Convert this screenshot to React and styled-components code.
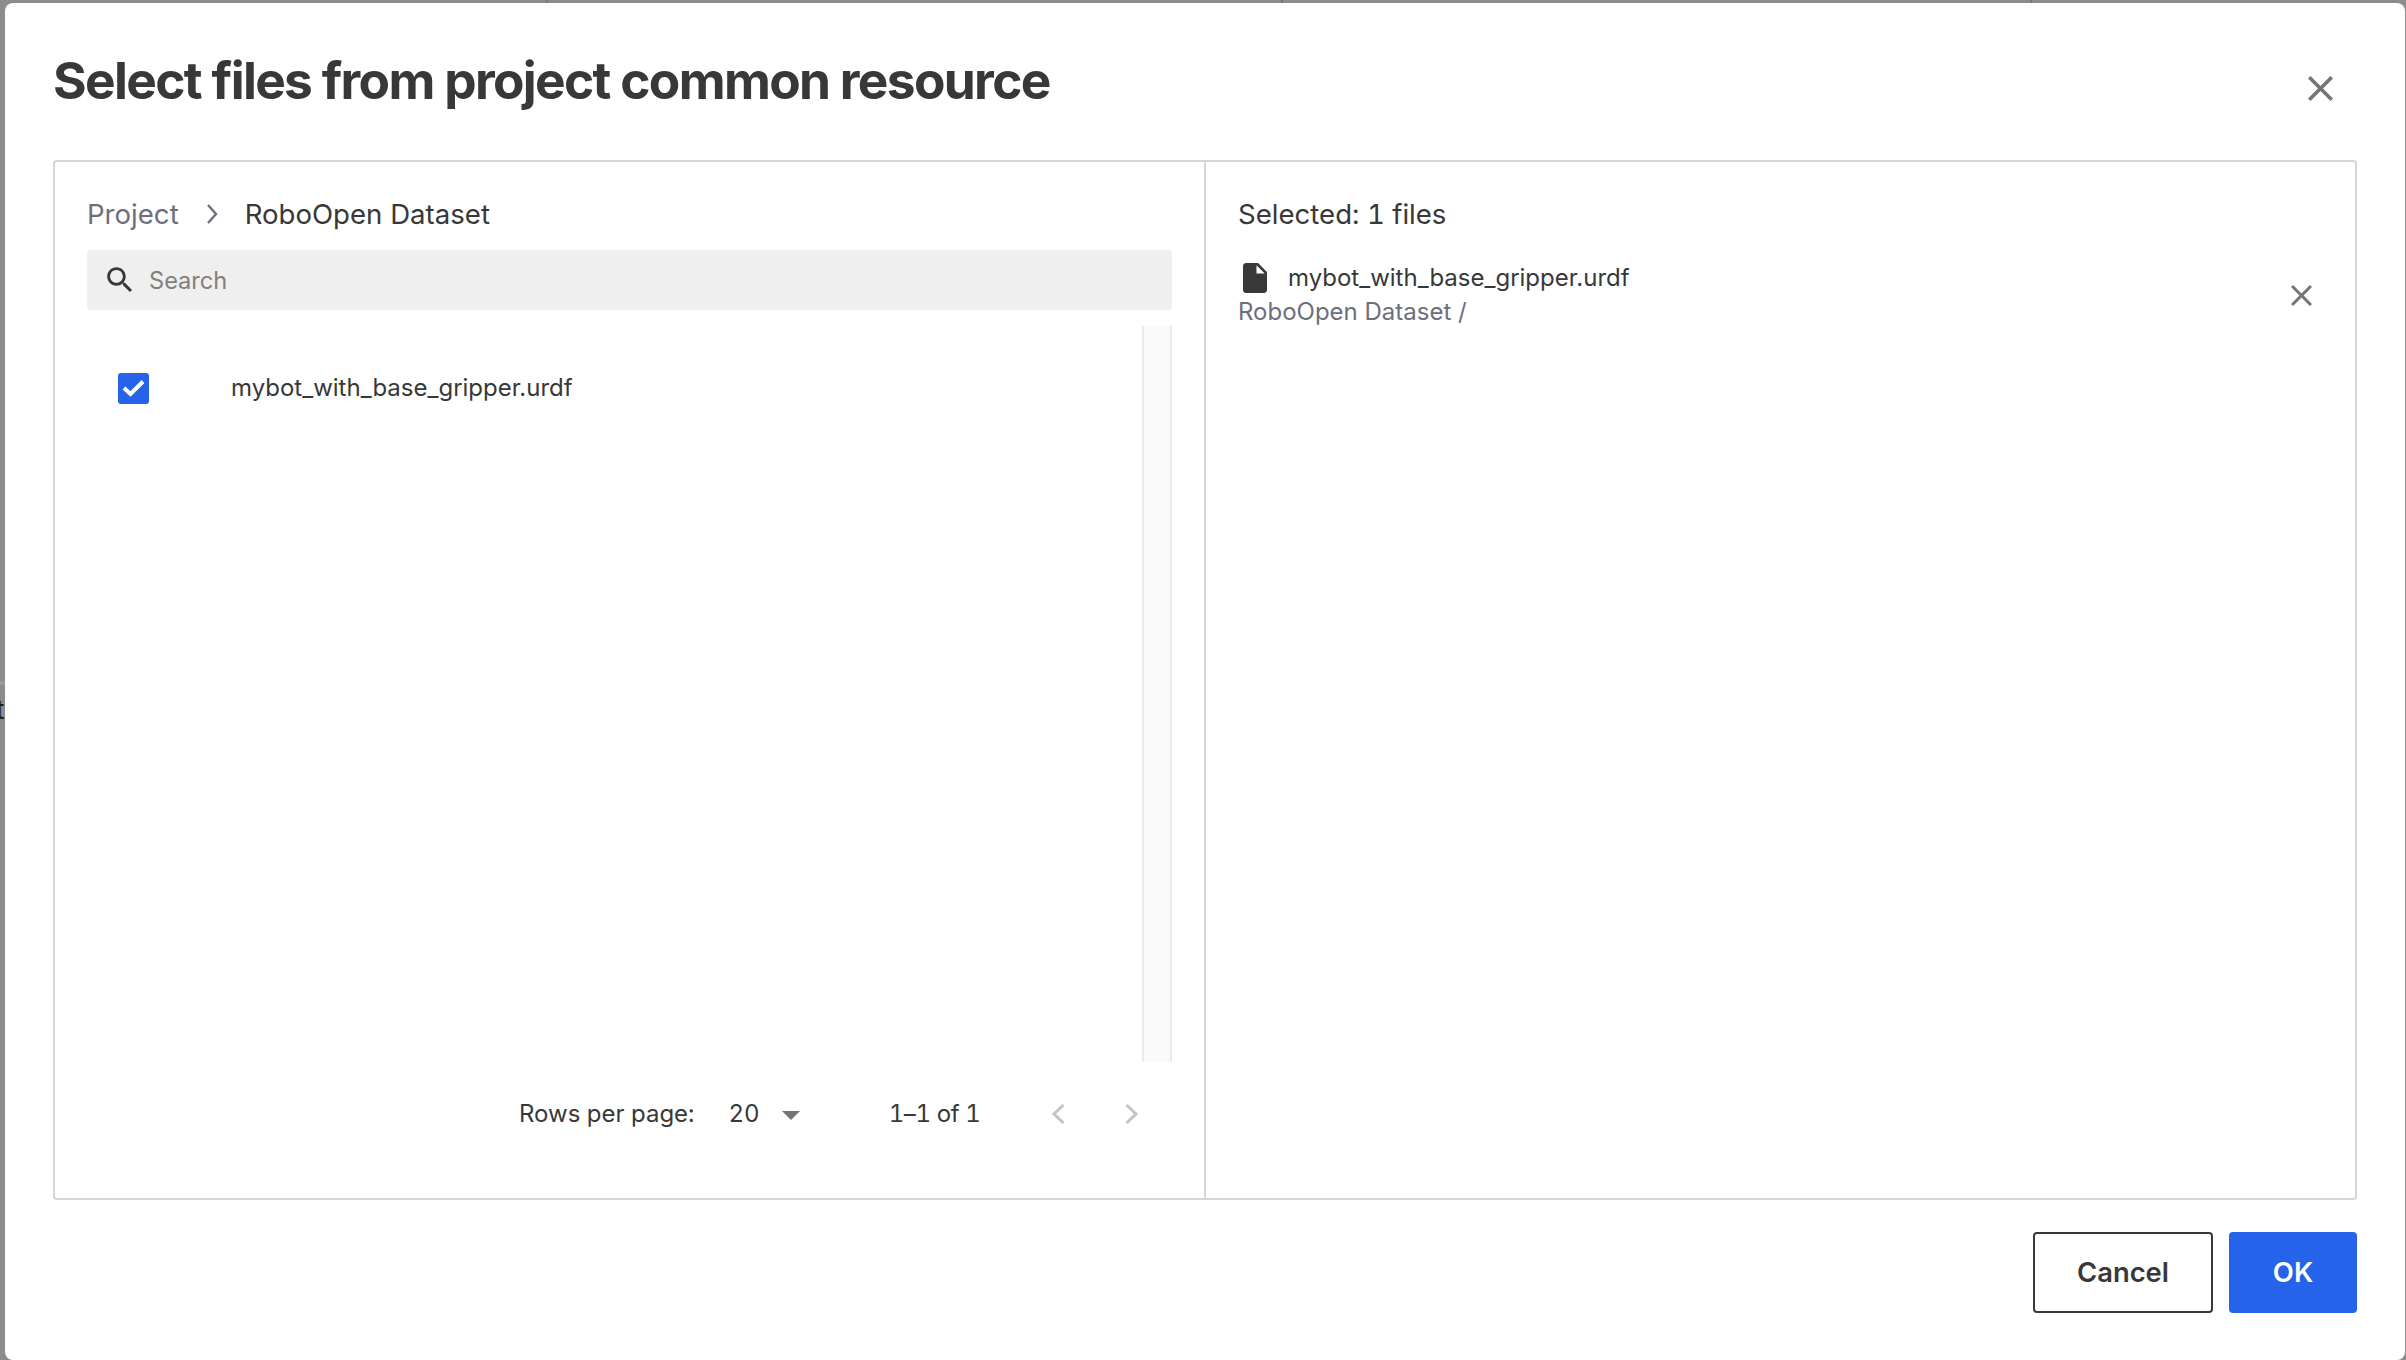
import React from "react";
import styled, { createGlobalStyle } from "styled-components";

const GlobalStyle = createGlobalStyle`
  html, body {
    margin: 0;
    padding: 0;
    background: #8c8c8c;
  }
  * {
    box-sizing: border-box;
  }
`;

const Backdrop = styled.div`
  position: relative;
  width: 2406px;
  height: 1360px;
  padding: 3px 1px 0 5px;
  overflow: hidden;
  background: #8c8c8c;
  font-family: Inter, "Liberation Sans", sans-serif;
  color: #383838;
`;

const BackdropTick = styled.span`
  position: absolute;
  top: 0;
  left: ${(p) => p.$x}px;
  width: 2px;
  height: 3px;
  background: #777;
`;

const BackdropLine = styled.span`
  position: absolute;
  top: 681px;
  left: 0;
  width: 5px;
  height: 4px;
  background: #9a9a9a;
`;

const BackdropLetter = styled.span`
  position: absolute;
  top: 695px;
  left: -4px;
  font-size: 26px;
  line-height: 30px;
  color: #1f1f1f;
`;

const Modal = styled.div`
  position: relative;
  display: flex;
  flex-direction: column;
  height: 100%;
  background: #fff;
  border-radius: 8px;
`;

const Header = styled.header`
  display: flex;
  align-items: flex-start;
  justify-content: space-between;
  height: 157px;
  padding: 49px 72px 0 48px;
`;

const Title = styled.h1`
  margin: 0;
  font-size: 51.4px;
  line-height: 56px;
  font-weight: 700;
  letter-spacing: -1.66px;
  color: #383838;
`;

const IconButton = styled.button`
  display: flex;
  padding: 0;
  border: 0;
  background: none;
  color: #757575;
  margin: ${(p) => p.$margin || 0};
`;

const Panels = styled.div`
  display: grid;
  grid-template-columns: 1151px 1fr;
  width: 2304px;
  height: 1040px;
  margin-left: 48px;
  border: 2px solid #d6d6d6;
  border-radius: 4px;
`;

const LeftPanel = styled.section`
  display: flex;
  flex-direction: column;
  padding: 30px 32px 0 32px;
  border-right: 2px solid #d6d6d6;
`;

const RightPanel = styled.section`
  display: flex;
  flex-direction: column;
  padding: 30px 31px 0 32px;
`;

const Breadcrumb = styled.nav`
  display: flex;
  align-items: center;
  height: 44px;
  font-size: 27.6px;
  line-height: 44px;
`;

const Crumb = styled.span`
  color: ${(p) => (p.$current ? "#383838" : "#6e6e7c")};
`;

const CrumbChevron = styled.svg`
  width: 14px;
  height: 22px;
  margin: 0 26px 0 26px;
  color: #6e6e7c;
`;

const SearchBox = styled.div`
  display: flex;
  align-items: center;
  height: 60px;
  margin-top: 14px;
  padding-left: 16px;
  background: #efefef;
  border-radius: 4px;
`;

const SearchIcon = styled.svg`
  flex: none;
  width: 34px;
  height: 34px;
  color: #383838;
`;

const SearchPlaceholder = styled.span`
  margin-left: 12px;
  font-size: 23.6px;
  color: #808080;
`;

const ListArea = styled.div`
  display: flex;
  height: 736px;
  margin-top: 16px;
`;

const ListBody = styled.div`
  flex: 1;
  padding-top: 47px;
`;

const ScrollTrack = styled.div`
  flex: none;
  width: 30px;
  background: #fafafa;
  border-left: 2px solid #ebebeb;
  border-right: 2px solid #ebebeb;
`;

const Row = styled.div`
  display: flex;
  align-items: center;
  height: 31px;
  padding-left: 31px;
`;

const Checkbox = styled.span`
  display: flex;
  flex: none;
  width: 31px;
  height: 31px;
  background: #2563eb;
  border-radius: 3px;
`;

const FileName = styled.span`
  font-size: 24px;
  line-height: 34px;
  color: #383838;
  margin-left: ${(p) => p.$gap}px;
`;

const RowFileName = styled(FileName)`
  margin-bottom: 2px;
`;

const Pagination = styled.div`
  display: flex;
  align-items: center;
  height: 40px;
  margin-top: 31px;
  padding-left: 432px;
  font-size: 24px;
  font-variant-numeric: tabular-nums;
  color: #383838;
`;

const RowsValue = styled.span`
  margin-left: 34px;
`;

const Caret = styled.span`
  width: 0;
  height: 0;
  margin: 4px 0 0 22px;
  border-left: 9px solid transparent;
  border-right: 9px solid transparent;
  border-top: 9px solid #757575;
`;

const PageRange = styled.span`
  margin-left: 89px;
  letter-spacing: -0.4px;
`;

const PageChevron = styled.svg`
  width: 14px;
  height: 20px;
  margin-top: 1px;
  color: #c4c4c4;
  margin-left: ${(p) => p.$gap}px;
`;

const SelectedTitle = styled.div`
  height: 44px;
  font-size: 27.6px;
  line-height: 44px;
  font-variant-numeric: tabular-nums;
  color: #383838;
`;

const SelectedItem = styled.div`
  display: flex;
  align-items: center;
  justify-content: space-between;
  margin-top: 25px;
`;

const SelectedInfo = styled.div`
  display: flex;
  flex-direction: column;
`;

const SelectedName = styled.div`
  display: flex;
  align-items: center;
  height: 34px;
`;

const FileIcon = styled.svg`
  flex: none;
  width: 36px;
  height: 36px;
  margin-left: -1px;
  color: #383838;
`;

const SelectedPath = styled.div`
  font-size: 24px;
  line-height: 34px;
  color: #6e6e7c;
`;

const Footer = styled.footer`
  display: flex;
  justify-content: flex-end;
  gap: 16px;
  padding: 32px 48px 0 0;
`;

const Button = styled.button`
  height: 81px;
  width: ${(p) => p.$width}px;
  padding: 0 0 2px;
  border: 2px solid ${(p) => (p.$primary ? "#2563eb" : "#383838")};
  border-radius: 4px;
  background: ${(p) => (p.$primary ? "#2563eb" : "#fff")};
  color: ${(p) => (p.$primary ? "#fff" : "#383838")};
  font-family: inherit;
  font-size: 27.4px;
  font-weight: 600;
`;

const CloseIcon = ({ size }) => (
  <svg width={size} height={size} viewBox="5 5 14 14" fill="currentColor">
    <path d="M19 6.41 17.59 5 12 10.59 6.41 5 5 6.41 10.59 12 5 17.59 6.41 19 12 13.41 17.59 19 19 17.59 13.41 12z" />
  </svg>
);

export default function App() {
  return (
    <>
      <GlobalStyle />
      <Backdrop>
        <BackdropTick $x={546} />
        <BackdropTick $x={1281} />
        <BackdropTick $x={2030} />
        <BackdropLine />
        <BackdropLetter>t</BackdropLetter>
        <Modal>
          <Header>
            <Title>Select files from project common resource</Title>
            <IconButton $margin="24px 0 0 0" aria-label="Close">
              <CloseIcon size={25} />
            </IconButton>
          </Header>
          <Panels>
            <LeftPanel>
              <Breadcrumb>
                <Crumb>Project</Crumb>
                <CrumbChevron viewBox="0 0 14 22" fill="none" stroke="currentColor" strokeWidth="2.4">
                  <path d="M3 2l8 9-8 9" />
                </CrumbChevron>
                <Crumb $current>RoboOpen Dataset</Crumb>
              </Breadcrumb>
              <SearchBox>
                <SearchIcon viewBox="0 0 24 24" fill="currentColor">
                  <path d="M15.5 14h-.79l-.28-.27C15.41 12.59 16 11.11 16 9.5 16 5.91 13.09 3 9.5 3S3 5.91 3 9.5 5.91 16 9.5 16c1.61 0 3.09-.59 4.23-1.57l.27.28v.79l5 4.99L20.49 19l-4.99-5zm-6 0C7.01 14 5 11.99 5 9.5S7.01 5 9.5 5 14 7.01 14 9.5 11.99 14 9.5 14z" />
                </SearchIcon>
                <SearchPlaceholder>Search</SearchPlaceholder>
              </SearchBox>
              <ListArea>
                <ListBody>
                  <Row>
                    <Checkbox>
                      <svg width="31" height="31" viewBox="0 0 31 31" fill="none" stroke="#fff" strokeWidth="4">
                        <path d="M6 15l6.5 6L25 8.5" />
                      </svg>
                    </Checkbox>
                    <RowFileName $gap={82}>mybot_with_base_gripper.urdf</RowFileName>
                  </Row>
                </ListBody>
                <ScrollTrack />
              </ListArea>
              <Pagination>
                <span>Rows per page:</span>
                <RowsValue>20</RowsValue>
                <Caret />
                <PageRange>1–1 of 1</PageRange>
                <PageChevron $gap={71} viewBox="0 0 14 20" fill="none" stroke="currentColor" strokeWidth="3">
                  <path d="M12.5 1L3 10l9.5 9" />
                </PageChevron>
                <PageChevron $gap={60} viewBox="0 0 14 20" fill="none" stroke="currentColor" strokeWidth="3">
                  <path d="M1.5 1L11 10l-9.5 9" />
                </PageChevron>
              </Pagination>
            </LeftPanel>
            <RightPanel>
              <SelectedTitle>Selected: 1 files</SelectedTitle>
              <SelectedItem>
                <SelectedInfo>
                  <SelectedName>
                    <FileIcon viewBox="0 0 24 24" fill="currentColor">
                      <path d="M6 2c-1.1 0-1.99.9-1.99 2L4 20c0 1.1.89 2 1.99 2H18c1.1 0 2-.9 2-2V8l-6-6H6zm7 7V3.5L18.5 9H13z" />
                    </FileIcon>
                    <FileName $gap={15}>mybot_with_base_gripper.urdf</FileName>
                  </SelectedName>
                  <SelectedPath>RoboOpen Dataset /</SelectedPath>
                </SelectedInfo>
                <IconButton $margin="0 12px 0 0" aria-label="Remove">
                  <CloseIcon size={21} />
                </IconButton>
              </SelectedItem>
            </RightPanel>
          </Panels>
          <Footer>
            <Button $width={180}>Cancel</Button>
            <Button $width={128} $primary>OK</Button>
          </Footer>
        </Modal>
      </Backdrop>
    </>
  );
}
